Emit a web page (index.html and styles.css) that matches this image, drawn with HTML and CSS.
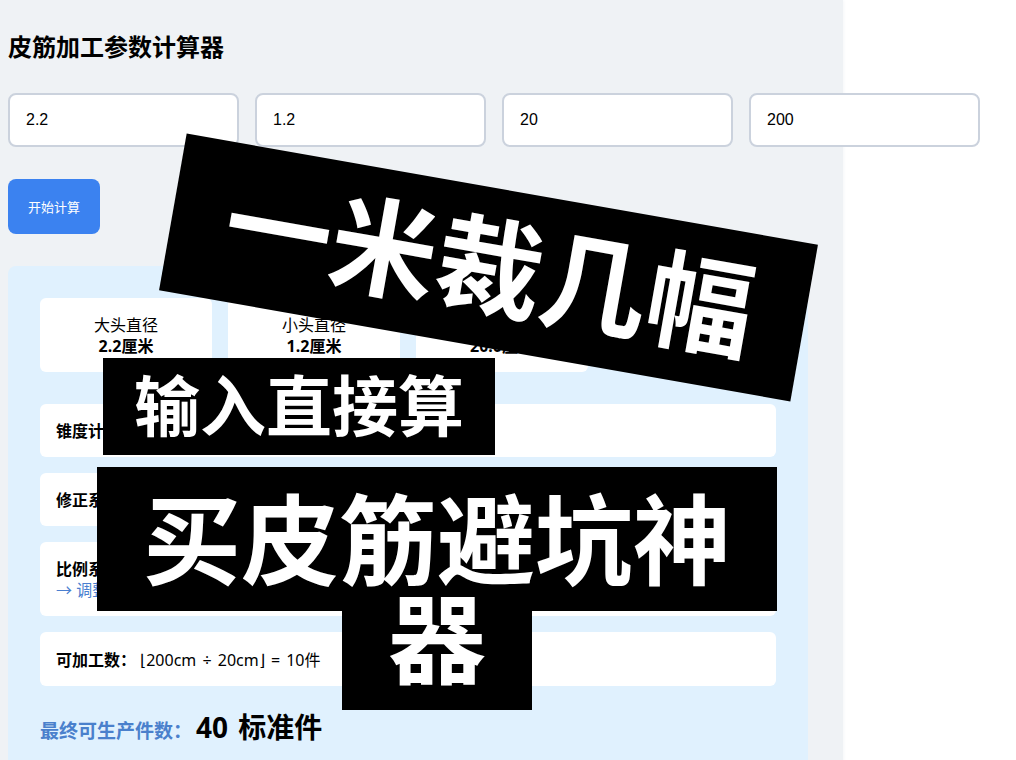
FILE: index.html
```html
<!DOCTYPE html>
<html lang="zh-CN">
<head>
<meta charset="utf-8">
<title>皮筋加工参数计算器</title>
<link rel="stylesheet" href="styles.css">
</head>
<body>
<main class="page">
  <h1 class="title">皮筋加工参数计算器</h1>
  <form class="form">
    <div class="fields">
      <input class="field" type="text" aria-label="大头直径" value="2.2">
      <input class="field" type="text" aria-label="小头直径" value="1.2">
      <input class="field" type="text" aria-label="单件长度" value="20">
      <input class="field" type="text" aria-label="总长度" value="200">
    </div>
    <button class="submit" type="button">开始计算</button>
  </form>
  <section class="result">
    <div class="cards">
      <div class="card">大头直径<strong>2.2厘米</strong></div>
      <div class="card">小头直径<strong>1.2厘米</strong></div>
      <div class="card">长度<strong>20.0厘米</strong></div>
    </div>
    <div class="step"><strong>锥度计</strong></div>
    <div class="step"><strong>修正系</strong></div>
    <div class="step"><strong>比例系</strong><div class="note">→ 调整</div></div>
    <div class="step"><strong>可加工数<span class="colon">：</span></strong> ⌊200cm <span class="op">÷</span> 20cm⌋ <span class="op">=</span> 10件</div>
    <p class="total"><span class="total-label">最终可生产件数<span class="colon">：</span></span><strong class="total-value">40 <span class="unit">标准件</span></strong></p>
  </section>
</main>
<div class="caption caption-top">一米裁几幅</div>
<div class="caption caption-middle">输入直接算</div>
<div class="caption-bottom">
  <div class="caption-line">买皮筋避坑神</div>
  <div class="caption-line caption-rest">器</div>
</div>
</body>
</html>
```
FILE: styles.css
```css
* { box-sizing: border-box; }
html { background: #fff; }
body {
  margin: 0;
  font: 16px/21px "Noto Sans", "Noto Sans CJK SC", sans-serif;
  color: #000;
}
.page {
  display: flex;
  flex-direction: column;
  width: calc(100% - 173px);
  min-height: 100vh;
  padding: 31px 35px 0 8px;
  background: #eff2f5;
  box-shadow: 0 0 4px #eff2f5;
}
.title { margin: 0 0 30px; font-size: 24px; line-height: 32px; }
.form { margin-bottom: 32px; }
.fields { display: flex; gap: 16px; margin: 0 -172px 32px 0; }
.field {
  flex: 1;
  min-width: 0;
  height: 54px;
  padding: 0 16px;
  border: 2px solid #cbd2dd;
  border-radius: 8px;
  background: #fff;
  font: 16px "Liberation Sans", sans-serif;
  color: #000;
}
.submit {
  display: block;
  height: 55px;
  padding: 0 20px;
  border: 0;
  border-radius: 8px;
  background: #3b82f0;
  color: #fff;
  font: 13px/20px "Noto Sans CJK SC", sans-serif;
}
.result {
  display: flex;
  flex: 1;
  flex-direction: column;
  gap: 16px;
  padding: 32px 32px 12px;
  border-radius: 8px 8px 0 0;
  background: #e0f1fe;
}
.cards {
  display: grid;
  grid-template-columns: repeat(4, 1fr);
  gap: 16px;
  margin-bottom: 16px;
}
.card, .step { padding: 17px 16px 15px; border-radius: 6px; background: #fff; }
.card { text-align: center; }
.card strong { display: block; }
.note { color: #4a7fd0; }
.colon { font-family: "Noto Sans CJK TC", sans-serif; }
.op { margin: 0 2px; }
.unit { margin-left: 3px; }
.total { display: flex; align-items: baseline; gap: 4px; margin: 6px 0 0; line-height: 38px; }
.total-label { font-size: 19px; font-weight: bold; color: #4a80cc; }
.total-value { font-size: 28px; }
.caption, .caption-bottom {
  position: absolute;
  font-family: "Noto Sans CJK SC", sans-serif;
  font-weight: bold;
  color: #fff;
  text-align: center;
  white-space: nowrap;
}
.caption { background: #000; }
.caption-top {
  left: 168px;
  top: 188px;
  padding: 0 52px 14px 54px;
  font-size: 107px;
  line-height: 145px;
  transform: rotate(10deg);
}
.caption-middle {
  left: 103px;
  top: 358px;
  padding: 0 31px 9px;
  font-size: 66px;
  line-height: 88px;
}
.caption-bottom {
  left: 97px;
  top: 467px;
  display: flex;
  flex-direction: column;
  align-items: center;
  font-size: 98px;
  line-height: 134px;
}
.caption-line { padding: 0 46px 10px; background: #000; }
.caption-rest {
  margin-top: -45px;
  background: linear-gradient(#000, #000) no-repeat bottom / 100% 99px;
}
```
